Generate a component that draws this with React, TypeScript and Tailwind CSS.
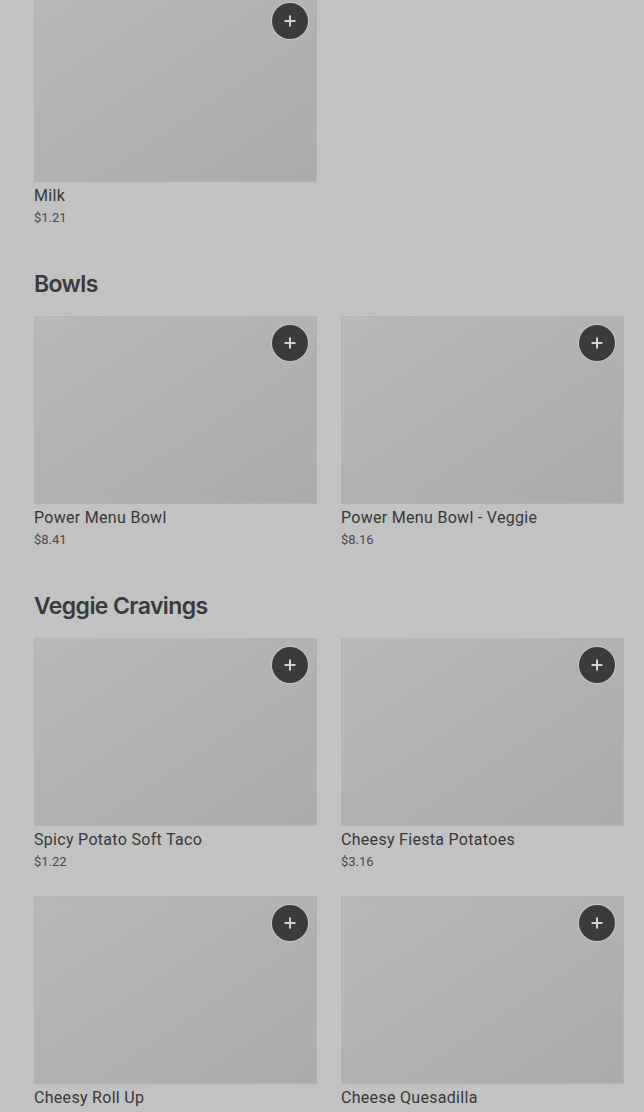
import { Plus } from "lucide-react"

type Item = { name: string; price: string }

const sections: { title?: string; items: Item[] }[] = [
  { items: [{ name: "Milk", price: "$1.21" }] },
  {
    title: "Bowls",
    items: [
      { name: "Power Menu Bowl", price: "$8.41" },
      { name: "Power Menu Bowl - Veggie", price: "$8.16" },
    ],
  },
  {
    title: "Veggie Cravings",
    items: [
      { name: "Spicy Potato Soft Taco", price: "$1.22" },
      { name: "Cheesy Fiesta Potatoes", price: "$3.16" },
      { name: "Cheesy Roll Up", price: "$1.00" },
      { name: "Cheese Quesadilla", price: "$4.49" },
    ],
  },
]

function ItemCard({ item }: { item: Item }) {
  return (
    <div className="flex flex-col">
      <div className="relative h-[188px] bg-gradient-to-br from-[#b9b9b9] to-[#ababab] border border-[#b3b3b3]">
        <button className="absolute top-[8px] right-[8px] w-9 h-9 rounded-full bg-[#3b3b3b] flex items-center justify-center shadow-[0_0_0_1px_rgba(220,220,220,0.5)]">
          <Plus size={16} strokeWidth={3} color="#d2d2d2" />
        </button>
      </div>
      <div className="mt-[3px] text-[16px] leading-[22px] font-normal tracking-[0.3px] text-[#383838]">{item.name}</div>
      <div className="mt-[1px] text-[13px] leading-[20px] text-[#4a4a4a]">{item.price}</div>
    </div>
  )
}

export default function App() {
  return (
    <div
      className="w-[644px] h-[1112px] overflow-hidden bg-[#c2c2c2] pl-[34px]"
      style={{ fontFamily: "Roboto, 'Liberation Sans', sans-serif" }}
    >
      <div className="-mt-[6px] w-[634px] flex flex-col gap-10">
        {sections.map((s, i) => (
          <section key={i} className="flex flex-col">
            {s.title && (
              <h2
                className="text-[23px] leading-8 font-semibold text-[#3a3a3a] tracking-[-0.6px] mb-4"
                style={{ fontFamily: "Inter, 'Liberation Sans', sans-serif" }}
              >
                {s.title}
              </h2>
            )}
            <div className="grid grid-cols-[283px_283px] gap-x-6 gap-y-6">
              {s.items.map((it) => (
                <ItemCard key={it.name} item={it} />
              ))}
            </div>
          </section>
        ))}
      </div>
    </div>
  )
}
